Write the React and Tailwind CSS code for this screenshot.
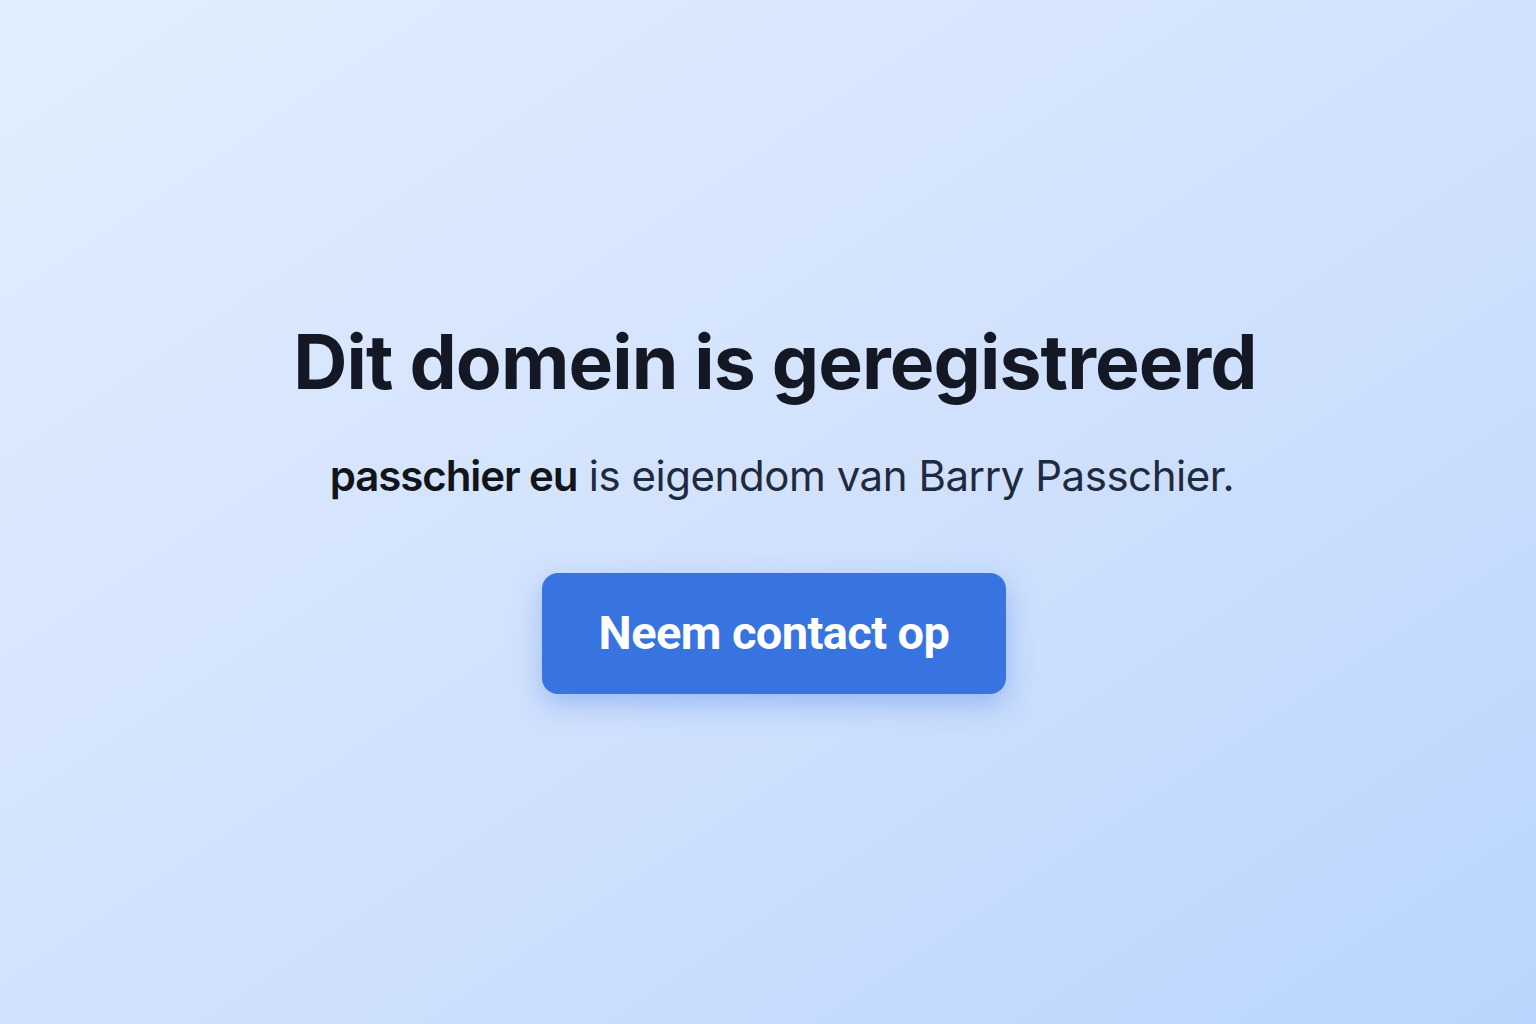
import React from 'react';

const App = () => {
  return (
    <div className="w-full h-[1024px] bg-gradient-to-br from-[#e1eefe] via-[#d2e2fd] to-[#bad5fd] flex flex-col items-center pl-[14px] font-['Inter',sans-serif]">
      <h1 className="mt-[318px] text-[75px] leading-[88px] font-bold tracking-[-0.9px] text-[#141824]">
        Dit domein is geregistreerd
      </h1>

      <p className="mt-[44px] ml-[14px] text-[42px] leading-[52px] tracking-[-0.45px] text-[#1f2a3d]">
        <span className="font-semibold text-[#111419] tracking-[-1.1px]">passchier eu</span> is eigendom van Barry Passchier.
      </p>

      <button className="mt-[71px] -ml-[2px] w-[464px] h-[121px] rounded-[16px] bg-[#3774df] shadow-[0_10px_28px_rgba(55,116,223,0.35)] text-white text-[47px] font-bold font-['Roboto',sans-serif] tracking-[-0.6px]">
        Neem contact op
      </button>
    </div>
  );
};

export default App;
